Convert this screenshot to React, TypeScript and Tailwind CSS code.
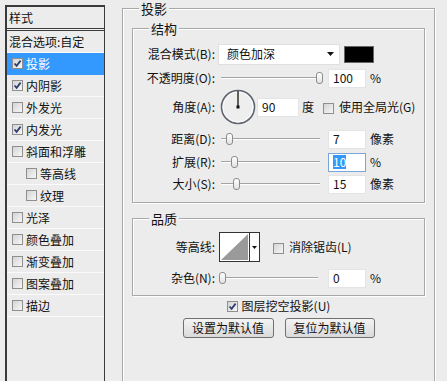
import React from 'react'

const font = {fontFamily: '"Noto Sans CJK SC", "Noto Sans", sans-serif'}

function Check({checked = false}: {checked?: boolean}) {
    return (
        <span className="inline-flex h-[11px] w-[11px] shrink-0 items-center justify-center border border-[#8f8f8f] bg-gradient-to-br from-[#d4d4d4] to-[#f7f7f7]">
            {checked && (
                <svg width="9" height="9" viewBox="0 0 9 9">
                    <path d="M1.5 4.5 L3.6 6.8 L7.6 1.6" fill="none" stroke="#2c3f6e" strokeWidth="1.8"/>
                </svg>
            )}
        </span>
    )
}

function Slider({pos}: {pos: number}) {
    return (
        <div className="relative h-[14px] w-[99px]">
            <div className="absolute left-0 right-0 top-[6px] h-[1px] bg-[#a3a3a3]"/>
            <div className="absolute left-0 right-0 top-[7px] h-[1px] bg-white"/>
            <div
                className="absolute top-[1px] h-[12px] w-[7px] rounded-[3px] border border-[#8c8c8c] bg-gradient-to-b from-white to-[#e2e2e2]"
                style={{left: pos}}
            />
        </div>
    )
}

function Field({value, selected = false, w = 'w-[38px]'}: {value: string; selected?: boolean; w?: string}) {
    return (
        <div className={`${w} flex h-[19px] items-center border bg-white pl-[4px] text-[12px] ${selected ? 'border-[#7aa7d8]' : 'border-[#e4e4e4]'}`}>
            <span className={selected ? 'bg-[#3399ff] text-white leading-[14px]' : 'leading-[14px]'}>{value}</span>
        </div>
    )
}

function Label({text}: {text: string}) {
    return <div className="w-[82px] shrink-0 text-right text-[12px] leading-none">{text}</div>
}

function Group({title, className, children}: {title: string; className?: string; children: React.ReactNode}) {
    return (
        <div className={`relative border border-[#a8a8a8] shadow-[inset_1px_1px_0_#fff,1px_1px_0_#fff] ${className ?? ''}`}>
            <span className="absolute left-[16px] top-[-8px] bg-[#ececec] px-[2px] text-[13px] leading-[15px]">{title}</span>
            {children}
        </div>
    )
}

const effects: {name: string; checked?: boolean; sub?: boolean; active?: boolean}[] = [
    {name: '投影', checked: true, active: true},
    {name: '内阴影', checked: true},
    {name: '外发光'},
    {name: '内发光', checked: true},
    {name: '斜面和浮雕'},
    {name: '等高线', sub: true},
    {name: '纹理', sub: true},
    {name: '光泽'},
    {name: '颜色叠加'},
    {name: '渐变叠加'},
    {name: '图案叠加'},
    {name: '描边'},
]

export default function App() {
    return (
        <div className="flex h-[381px] w-[447px] overflow-hidden bg-[#ececec] text-[#111]" style={font}>
            {/* Styles list */}
            <div className="ml-[5px] mt-[5px] h-[420px] w-[100px] shrink-0 border-2 border-r border-[#3a3a3a] bg-[#ececec]">
                <div className="flex h-[21px] items-center pl-[2px] text-[12px]">样式</div>
                <div className="h-[3px] border-y border-[#3a3a3a] bg-[#f4f4f4]"/>
                <div className="flex h-[22px] items-center border-b border-[#fafafa] pl-[2px] text-[12px]">混合选项:自定</div>
                {effects.map(e => (
                    <div
                        key={e.name}
                        className={`flex h-[22px] items-center gap-[3px] border-b text-[12px] ${e.sub ? 'pl-[19px]' : 'pl-[5px]'} ${e.active ? 'border-[#3399ff] bg-[#3399ff] text-white' : 'border-[#fafafa]'}`}
                    >
                        <Check checked={e.checked}/>
                        <span>{e.name}</span>
                    </div>
                ))}
            </div>

            {/* Drop shadow settings */}
            <div className="ml-[17px] mt-[8px] w-[313px] shrink-0">
                <Group title="投影" className="h-[420px] px-[9px] pt-[19px]">
                    <Group title="结构" className="pb-[7px] pt-[14px]">
                        <div className="flex h-[22px] items-center">
                            <Label text="混合模式(B):"/>
                            <div className="ml-[3px] flex h-[21px] w-[122px] items-center justify-between border border-[#e0e0e0] bg-white pl-[8px] pr-[5px] text-[12px]">
                                <span>颜色加深</span>
                                <svg width="7" height="4" viewBox="0 0 7 4"><path d="M0 0 H7 L3.5 4 Z" fill="#111"/></svg>
                            </div>
                            <div className="ml-[4px] h-[17px] w-[30px] border border-[#666] bg-black"/>
                        </div>
                        <div className="mt-[2px] flex h-[22px] items-center">
                            <Label text="不透明度(O):"/>
                            <div className="ml-[6px]"><Slider pos={95}/></div>
                            <div className="ml-[8px]"><Field value="100"/></div>
                            <span className="ml-[4px] text-[12px]">%</span>
                        </div>
                        <div className="flex h-[36px] items-center">
                            <Label text="角度(A):"/>
                            <svg className="ml-[5px]" width="36" height="36" viewBox="0 0 36 36">
                                <circle cx="18" cy="18" r="16.5" fill="#eeeeee" stroke="#5d6470" strokeWidth="1.6"/>
                                <circle cx="18" cy="18" r="15" fill="none" stroke="#ffffff" strokeWidth="0.8"/>
                                <line x1="18" y1="18" x2="18" y2="2" stroke="#111" strokeWidth="1.3"/>
                                <rect x="16.5" y="16.5" width="3" height="3" fill="#111"/>
                            </svg>
                            <div className="ml-[1px]"><Field value="90" w="w-[42px]"/></div>
                            <span className="ml-[3px] text-[12px]">度</span>
                            <span className="ml-[9px]"><Check/></span>
                            <span className="ml-[5px] text-[12px]">使用全局光(G)</span>
                        </div>
                        <div className="mt-[3px] flex h-[22px] items-center">
                            <Label text="距离(D):"/>
                            <div className="ml-[6px]"><Slider pos={5}/></div>
                            <div className="ml-[8px]"><Field value="7"/></div>
                            <span className="ml-[4px] text-[12px]">像素</span>
                        </div>
                        <div className="mt-[1px] flex h-[22px] items-center">
                            <Label text="扩展(R):"/>
                            <div className="ml-[6px]"><Slider pos={10}/></div>
                            <div className="ml-[8px]"><Field value="10" selected/></div>
                            <span className="ml-[4px] text-[12px]">%</span>
                        </div>
                        <div className="flex h-[22px] items-center">
                            <Label text="大小(S):"/>
                            <div className="ml-[6px]"><Slider pos={12}/></div>
                            <div className="ml-[8px]"><Field value="15"/></div>
                            <span className="ml-[4px] text-[12px]">像素</span>
                        </div>
                    </Group>

                    <Group title="品质" className="mt-[15px] pb-[6px] pt-[13px]">
                        <div className="flex h-[30px] items-center">
                            <Label text="等高线:"/>
                            <div className="ml-[4px] flex h-[30px] w-[41px] border border-[#333] bg-white">
                                <svg width="29" height="28" viewBox="0 0 29 28">
                                    <path d="M1 27 L28 1 L28 27 Z" fill="#9a9a9a"/>
                                </svg>
                                <div className="flex flex-1 items-center justify-center border-l border-[#333]">
                                    <svg width="5" height="3" viewBox="0 0 5 3"><path d="M0 0 H5 L2.5 3 Z" fill="#111"/></svg>
                                </div>
                            </div>
                            <span className="ml-[13px]"><Check/></span>
                            <span className="ml-[5px] text-[12px]">消除锯齿(L)</span>
                        </div>
                        <div className="mt-[5px] flex h-[22px] items-center">
                            <Label text="杂色(N):"/>
                            <div className="ml-[4px]"><Slider pos={0}/></div>
                            <div className="ml-[10px]"><Field value="0"/></div>
                            <span className="ml-[4px] text-[12px]">%</span>
                        </div>
                    </Group>

                    <div className="mt-[2px] flex h-[16px] items-center justify-center gap-[4px] text-[12px]">
                        <Check checked/>
                        <span>图层挖空投影(U)</span>
                    </div>
                    <div className="mt-[4px] flex justify-center gap-[11px]">
                        <button className="h-[20px] w-[91px] rounded-[3px] border border-[#707070] bg-gradient-to-b from-[#f4f4f4] to-[#dadada] text-[12px] leading-none">设置为默认值</button>
                        <button className="h-[20px] w-[90px] rounded-[3px] border border-[#707070] bg-gradient-to-b from-[#f4f4f4] to-[#dadada] text-[12px] leading-none">复位为默认值</button>
                    </div>
                </Group>
            </div>
        </div>
    )
}
